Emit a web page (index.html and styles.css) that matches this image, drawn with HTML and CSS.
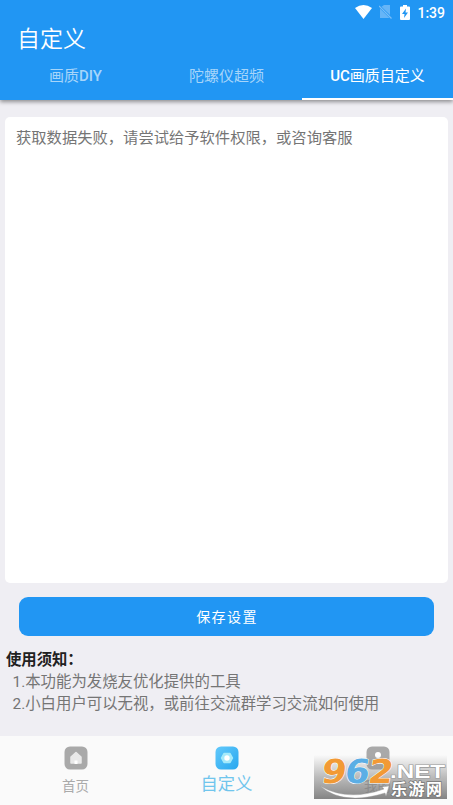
FILE: index.html
```
<!DOCTYPE html>
<html lang="zh-CN">
<head>
    <meta charset="UTF-8">
    <title>自定义</title>
    <link rel="stylesheet" href="styles.css">
</head>
<body>
    <header class="header">
        <div class="status">
            <svg class="wifi" width="17" height="14" viewBox="0 0 18 14" preserveAspectRatio="none"><path d="M0 3Q9-3 18 3L9 14Z" fill="#fff"/></svg>
            <svg class="sim" width="13" height="14" viewBox="0 0 13 14">
                <path d="M5 0H11V10L2.500 1.800ZM1 3.500L10.500 13H1Z" fill="#66b5f7"/>
                <path d="M0 1L12.500 13.500" stroke="#79bef8" stroke-width="1.200"/>
            </svg>
            <svg class="battery" width="10" height="15" viewBox="0 0 10 15">
                <path d="M3 0H7V1.500H9Q10 1.500 10 2.500V14Q10 15 9 15H1Q0 15 0 14V2.500Q0 1.500 1 1.500H3Z" fill="#fff"/>
                <path d="M6 3.500L2 9H4.500L4 13L8 7.500H5.500Z" fill="#2196f3"/>
            </svg>
            <span class="clock">1:39</span>
        </div>
        <h1>自定义</h1>
        <nav class="tabs">
            <a class="tab">画质<b>DIY</b></a>
            <a class="tab">陀螺仪超频</a>
            <a class="tab active"><b>UC</b>画质自定义</a>
        </nav>
    </header>

    <main>
        <div class="editor">获取数据失败，请尝试给予软件权限，或咨询客服</div>
        <button class="save">保存设置</button>
        <section class="notes">
            <h2>使用须知：</h2>
            <p>1.本功能为发烧友优化提供的工具</p>
            <p>2.小白用户可以无视，或前往交流群学习交流如何使用</p>
        </section>
    </main>

    <footer class="bottom-nav">
        <a class="nav-item">
            <svg width="24" height="24" viewBox="0 0 24 24">
                <rect x="0.500" y="0.500" width="23" height="23" rx="5.500" fill="#a9a9a9"/>
                <path d="M12 6.500L17 11V17H7V11Z" fill="#e9e9e9" stroke="#e9e9e9" stroke-width="1.500" stroke-linejoin="round"/>
                <path d="M10.500 18V14.500H13.500V18Z" fill="#fff"/>
            </svg>
            <span>首页</span>
        </a>
        <a class="nav-item current">
            <svg width="24" height="24" viewBox="0 0 24 24">
                <defs>
                    <linearGradient id="blue" x1="0" y1="0" x2="1" y2="1">
                        <stop offset="0" stop-color="#62c9fb"/>
                        <stop offset="1" stop-color="#27a7ef"/>
                    </linearGradient>
                </defs>
                <rect x="0.500" y="0.500" width="23" height="23" rx="5.500" fill="url(#blue)"/>
                <path d="M9 7.500H15L17.500 12L15 16.500H9L6.500 12Z" fill="#a5eafa" stroke="#a5eafa" stroke-width="1.500" stroke-linejoin="round"/>
                <circle cx="12" cy="12" r="2.700" fill="#fff"/>
            </svg>
            <span>自定义</span>
        </a>
        <a class="nav-item">
            <svg width="24" height="24" viewBox="0 0 24 24">
                <rect x="0.500" y="0.500" width="23" height="23" rx="5.500" fill="#a9a9a9"/>
                <circle cx="12" cy="9" r="3" fill="#fff"/>
                <path d="M6 18Q6 13 12 13T18 18Z" fill="#e9e9e9"/>
            </svg>
            <span>我的</span>
        </a>
    </footer>

    <svg class="watermark" width="133" height="44" viewBox="0 0 133 44">
        <defs>
            <linearGradient id="shade" x1="0" y1="0" x2="0" y2="1">
                <stop offset="0" stop-color="#888" stop-opacity="0"/>
                <stop offset="0.500" stop-color="#888" stop-opacity="0.550"/>
                <stop offset="1" stop-color="#777" stop-opacity="0.900"/>
            </linearGradient>
        </defs>
        <rect width="133" height="44" fill="url(#shade)"/>
        <path d="M6 31Q34 47 70 34L68 32L75 31L72 41L71 38Q29 51 6 31Z" fill="#fff" stroke="#999" stroke-width="0.400"/>
        <g class="digits" transform="skewX(-8)">
            <text x="10" y="27.500" textLength="25" lengthAdjust="spacingAndGlyphs" fill="#f29a35">9</text>
            <text x="33.500" y="27.500" textLength="25" lengthAdjust="spacingAndGlyphs" fill="#5baee5">6</text>
            <text x="57" y="27.500" textLength="25" lengthAdjust="spacingAndGlyphs" fill="#f29a35">2</text>
        </g>
        <text class="net" x="76" y="22.500" textLength="55" lengthAdjust="spacingAndGlyphs">.NET</text>
        <text class="site" x="77" y="40" textLength="51">乐游网</text>
    </svg>
</body>
</html>
```
FILE: styles.css
```
* {
    box-sizing: border-box;
}
body {
    margin: 0;
    height: 805px;
    display: flex;
    flex-direction: column;
    position: relative;
    overflow: hidden;
    background: #efeef3;
    font-family: Roboto, "Noto Sans CJK SC", sans-serif;
}
.header {
    height: 100px;
    display: flex;
    flex-direction: column;
    flex-shrink: 0;
    background: #2196f3;
    color: #fff;
    box-shadow: 0 2px 4px rgba(0, 0, 0, 0.4);
}
.status {
    height: 25px;
    display: flex;
    justify-content: flex-end;
    align-items: center;
    padding-right: 8px;
    font-size: 14px;
    font-weight: 500;
}
.clock {
    padding-top: 1px;
}
.sim {
    margin-left: 7px;
}
.battery {
    margin-left: 8px;
    margin-right: 7px;
}
h1 {
    margin: 2px 0 0;
    padding-left: 17px;
    height: 28px;
    line-height: 28px;
    font-size: 23px;
    font-weight: 350;
}
.tabs {
    flex: 1;
    display: flex;
}
.tab {
    flex: 1;
    text-align: center;
    line-height: 44px;
    font-size: 15px;
    color: #a6d5fa;
}
.tab b {
    font-weight: 500;
}
.tab.active {
    color: #fff;
    border-bottom: 2px solid #fff;
}
main {
    flex: 1;
    display: flex;
    flex-direction: column;
    padding: 17px 5px 0;
}
.editor {
    height: 466px;
    padding: 10px 11px;
    border-radius: 5px;
    background: #fff;
    color: #757575;
    font-size: 15.3px;
    line-height: 22px;
}
.save {
    height: 39px;
    margin: 14px 14px 0;
    padding: 0 0 2px 1px;
    border: none;
    border-radius: 9px;
    background: #2196f3;
    color: #fff;
    font-family: inherit;
    font-size: 14px;
    letter-spacing: 1.4px;
}
.notes {
    padding: 13px 2px 0;
    font-size: 15.4px;
    line-height: 22px;
    color: #757575;
}
h2 {
    margin: 0 0 0 -1px;
    font-size: 15.35px;
    font-weight: 700;
    color: #212121;
}
.notes p {
    margin: 0;
    padding-left: 5.5px;
}
.bottom-nav {
    height: 69px;
    display: flex;
    flex-shrink: 0;
    background: #fafafa;
}
.nav-item {
    flex: 1;
    display: flex;
    flex-direction: column;
    align-items: center;
    padding-top: 10px;
    font-size: 13.5px;
    line-height: 20px;
    color: #aaa;
}
.nav-item span {
    margin-top: 6px;
}
.nav-item.current {
    font-size: 17.3px;
    color: #70c5ed;
}
.nav-item.current span {
    margin-top: 4px;
}
/* site badge over the corner of the nav */
.watermark {
    position: absolute;
    left: 314px;
    top: 755px;
    overflow: visible;
}
.digits {
    font: bold 33px "DejaVu Sans", sans-serif;
    stroke: #fff;
    stroke-width: 1px;
    paint-order: stroke;
}
.net {
    font: bold 19px "Liberation Sans", sans-serif;
    fill: #fff;
    stroke: #999;
    stroke-width: 1.2px;
    paint-order: stroke;
}
.site {
    font: bold 16px "Noto Sans CJK SC", sans-serif;
    fill: #fff;
    stroke: #777;
    stroke-width: 1.5px;
    paint-order: stroke;
}
```
